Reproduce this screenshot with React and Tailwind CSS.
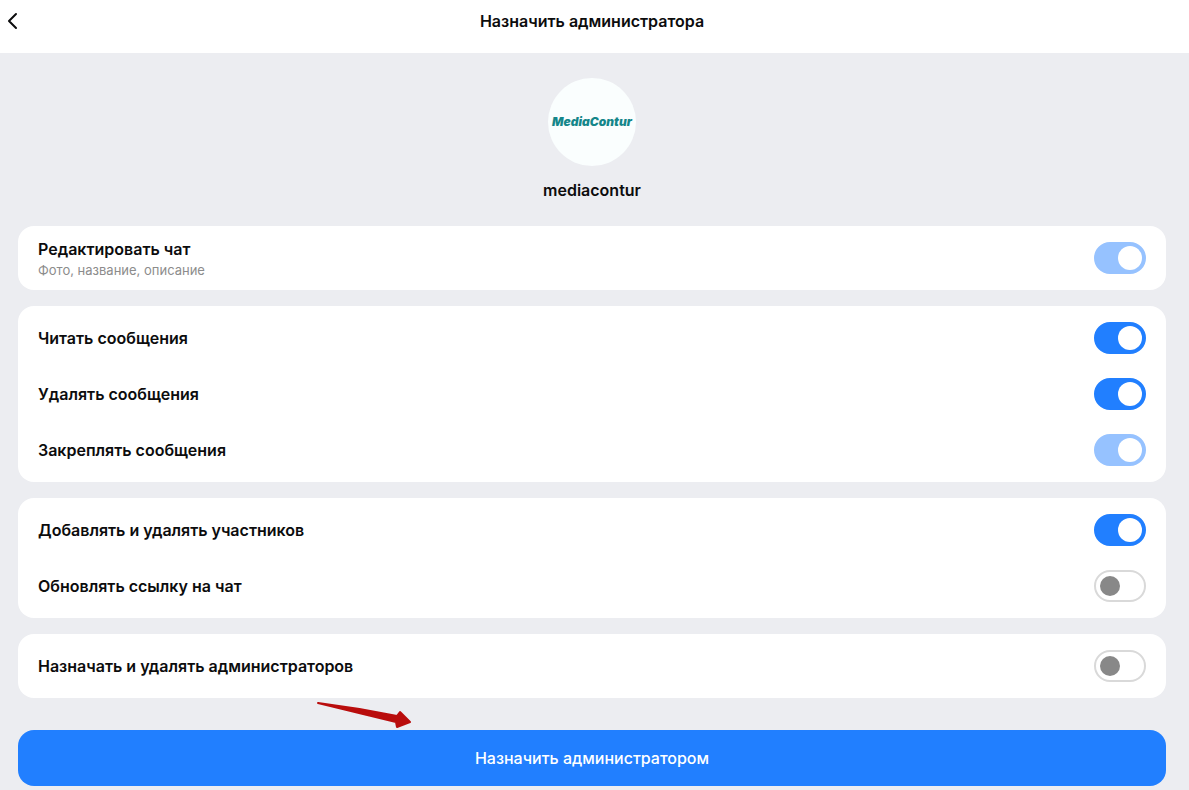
import { useState } from 'react';

const groups = [
  [
    { id: 'edit', label: 'Редактировать чат', hint: 'Фото, название, описание', locked: true },
  ],
  [
    { id: 'read', label: 'Читать сообщения' },
    { id: 'remove', label: 'Удалять сообщения' },
    { id: 'pin', label: 'Закреплять сообщения', locked: true },
  ],
  [
    { id: 'members', label: 'Добавлять и удалять участников' },
    { id: 'link', label: 'Обновлять ссылку на чат' },
  ],
  [
    { id: 'admins', label: 'Назначать и удалять администраторов' },
  ],
];

function Switch({ id, checked, disabled, onChange }) {
  return (
    <input
      type="checkbox"
      role="switch"
      id={id}
      checked={checked}
      disabled={disabled}
      onChange={onChange}
      className="flex h-8 w-13 shrink-0 cursor-pointer appearance-none items-center rounded-full border-2 border-[#d9d9d9] bg-white px-1 before:block before:size-5 before:rounded-full before:bg-[#888888] before:content-[''] checked:justify-end checked:border-[#217fff] checked:bg-[#217fff] checked:px-0.5 checked:before:size-6 checked:before:bg-white disabled:cursor-default disabled:checked:border-[#96c2ff] disabled:checked:bg-[#96c2ff]"
    />
  );
}

function PermissionRow({ item, checked, onToggle }) {
  return (
    <div className="flex min-h-14 items-center justify-between gap-4">
      <label htmlFor={item.id} className="flex flex-col text-base font-semibold leading-6">
        {item.label}
        {item.hint && (
          <span className="text-[13px] font-normal leading-[18px] text-[#8c8c8c]">{item.hint}</span>
        )}
      </label>
      <Switch
        id={item.id}
        checked={checked}
        disabled={item.locked}
        onChange={() => onToggle(item.id)}
      />
    </div>
  );
}

export default function App() {
  const [permissions, setPermissions] = useState({
    edit: true,
    read: true,
    remove: true,
    pin: true,
    members: true,
    link: false,
    admins: false,
  });

  const toggle = (id) => setPermissions(prev => ({ ...prev, [id]: !prev[id] }));

  return (
    <div className="min-h-screen bg-[#ecedf1] font-['Inter',sans-serif] text-[#0c0c0d]">
      {/* Header */}
      <header className="grid grid-cols-[26px_1fr_26px] items-center bg-white pt-[9px] pr-[5px] pb-5">
        <button type="button" aria-label="Назад" className="flex justify-center">
          <svg width="12" height="18" viewBox="0 0 12 18" fill="none" stroke="currentColor" strokeWidth="2" strokeLinecap="round" strokeLinejoin="round">
            <path d="M9 2 2 9l7 7" />
          </svg>
        </button>
        <h1 className="text-center text-base font-semibold leading-6">Назначить администратора</h1>
      </header>

      <main className="pt-[25px] pr-[23px] pb-1 pl-[18px]">
        {/* Profile */}
        <div className="flex flex-col items-center gap-3">
          <div className="flex size-22 items-center justify-center rounded-full bg-[#fafefe]">
            <span className="text-xs font-black italic text-[#15868a]">MediaContur</span>
          </div>
          <h2 className="text-base font-semibold leading-6">mediacontur</h2>
        </div>

        {/* Permissions */}
        <div className="mt-6 flex flex-col gap-4">
          {groups.map(items => (
            <section key={items[0].id} className="rounded-2xl bg-white px-5 py-1">
              {items.map(item => (
                <PermissionRow
                  key={item.id}
                  item={item}
                  checked={permissions[item.id]}
                  onToggle={toggle}
                />
              ))}
            </section>
          ))}
        </div>

        <div className="relative mt-8">
          <button type="button" className="h-14 w-full rounded-2xl bg-[#217fff] text-base font-medium text-white">
            Назначить администратором
          </button>
          {/* Arrow pointing at the button */}
          <svg className="pointer-events-none absolute -top-8 left-[298px]" width="100" height="34" viewBox="0 0 100 34">
            <path
              d="M2 5 Q42 10 81 18 L84 14 94 24 81 29 80 24Z"
              fill="#b90d0d"
              stroke="#b90d0d"
              strokeWidth="2"
              strokeLinejoin="round"
            />
          </svg>
        </div>
      </main>
    </div>
  );
}
